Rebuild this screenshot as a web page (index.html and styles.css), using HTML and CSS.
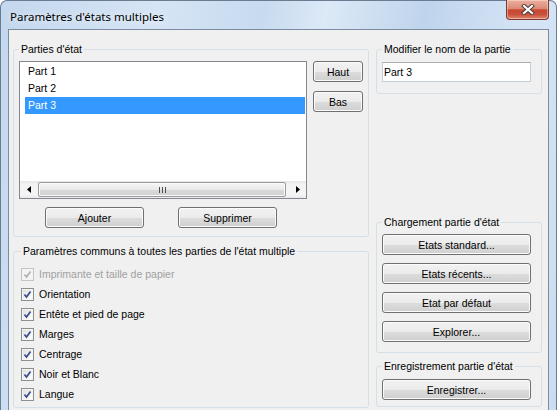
FILE: index.html
```html
<!DOCTYPE html>
<html lang="fr">
<head>
    <meta charset="UTF-8">
    <meta name="viewport" content="width=device-width, initial-scale=1.0">
    <title>Paramètres d'états multiples</title>
    <link rel="stylesheet" href="styles.css">
</head>
<body>
    <div class="window">
        <div class="titlebar">
            <span class="title">Paramètres d'états multiples</span>
            <button class="close-btn" title="Fermer">
                <svg width="14" height="11" viewBox="0 0 14 11">
                    <path d="M3 2 L11 9 M11 2 L3 9" stroke="#4a3a38" stroke-width="4" stroke-linecap="square" fill="none"/>
                    <path d="M3 2 L11 9 M11 2 L3 9" stroke="#ffffff" stroke-width="2.2" stroke-linecap="square" fill="none"/>
                </svg>
            </button>
        </div>

        <div class="client">
            <div class="col-left">
                <fieldset class="group parts">
                    <legend>Parties d'état</legend>
                    <div class="parts-row">
                        <div class="listbox">
                            <ul class="items">
                                <li>Part 1</li>
                                <li>Part 2</li>
                                <li class="selected">Part 3</li>
                            </ul>
                            <div class="hscroll">
                                <span class="arrow"><svg width="4" height="7" viewBox="0 0 4 7"><path d="M4 0 L0 3.5 L4 7 Z" fill="#000"/></svg></span>
                                <span class="track">
                                    <span class="thumb">
                                        <svg width="7" height="6" viewBox="0 0 7 6"><path d="M0.5 0 V6 M3.5 0 V6 M6.5 0 V6" stroke="#4d4d4d" stroke-width="1"/></svg>
                                    </span>
                                </span>
                                <span class="arrow"><svg width="4" height="7" viewBox="0 0 4 7"><path d="M0 0 L4 3.5 L0 7 Z" fill="#000"/></svg></span>
                            </div>
                        </div>
                        <div class="side-btns">
                            <button class="btn">Haut</button>
                            <button class="btn">Bas</button>
                        </div>
                    </div>
                    <div class="add-row">
                        <button class="btn add-btn">Ajouter</button>
                        <button class="btn add-btn">Supprimer</button>
                    </div>
                </fieldset>

                <fieldset class="group common">
                    <legend>Paramètres communs à toutes les parties de l'état multiple</legend>
                    <label class="check disabled"><span class="box"><svg width="11" height="11" viewBox="0 0 11 11"><path d="M2.5 5.5 L4.5 8 L8.5 2.5" stroke="#b4b4b4" stroke-width="1.8" fill="none"/></svg></span>Imprimante et taille de papier</label>
                    <label class="check"><span class="box"><svg width="11" height="11" viewBox="0 0 11 11"><path d="M2.5 5.5 L4.5 8 L8.5 2.5" stroke="#3b4f8a" stroke-width="1.8" fill="none"/></svg></span>Orientation</label>
                    <label class="check"><span class="box"><svg width="11" height="11" viewBox="0 0 11 11"><path d="M2.5 5.5 L4.5 8 L8.5 2.5" stroke="#3b4f8a" stroke-width="1.8" fill="none"/></svg></span>Entête et pied de page</label>
                    <label class="check"><span class="box"><svg width="11" height="11" viewBox="0 0 11 11"><path d="M2.5 5.5 L4.5 8 L8.5 2.5" stroke="#3b4f8a" stroke-width="1.8" fill="none"/></svg></span>Marges</label>
                    <label class="check"><span class="box"><svg width="11" height="11" viewBox="0 0 11 11"><path d="M2.5 5.5 L4.5 8 L8.5 2.5" stroke="#3b4f8a" stroke-width="1.8" fill="none"/></svg></span>Centrage</label>
                    <label class="check"><span class="box"><svg width="11" height="11" viewBox="0 0 11 11"><path d="M2.5 5.5 L4.5 8 L8.5 2.5" stroke="#3b4f8a" stroke-width="1.8" fill="none"/></svg></span>Noir et Blanc</label>
                    <label class="check"><span class="box"><svg width="11" height="11" viewBox="0 0 11 11"><path d="M2.5 5.5 L4.5 8 L8.5 2.5" stroke="#3b4f8a" stroke-width="1.8" fill="none"/></svg></span>Langue</label>
                </fieldset>
            </div>

            <div class="col-right">
                <fieldset class="group rename">
                    <legend>Modifier le nom de la partie</legend>
                    <input type="text" class="name-input" value="Part 3">
                </fieldset>

                <fieldset class="group load">
                    <legend>Chargement partie d'état</legend>
                    <button class="btn">Etats standard...</button>
                    <button class="btn">Etats récents...</button>
                    <button class="btn">Etat par défaut</button>
                    <button class="btn">Explorer...</button>
                </fieldset>

                <fieldset class="group save">
                    <legend>Enregistrement partie d'état</legend>
                    <button class="btn">Enregistrer...</button>
                </fieldset>
            </div>
        </div>
    </div>
</body>
</html>
```

FILE: styles.css
```css
* {
    box-sizing: border-box;
}
body {
    margin: 0;
    overflow: hidden;
    background: #ffffff;
    font-family: "Liberation Sans", Arial, sans-serif;
    font-size: 10.5px;
    color: #000;
}
.window {
    width: 557px;
    height: 410px;
    display: flex;
    flex-direction: column;
    padding: 0 7px;
    border: 1px solid #6a7c92;
    border-bottom: none;
    border-radius: 7px 7px 0 0;
    background: linear-gradient(100deg, #c3d7ee 0%, #d6e5f5 25%, #c7daef 42%, #dce9f7 52%, #bfd4ec 68%, #d6e5f6 85%, #cadcf0 100%);
}
.titlebar {
    height: 28px;
    display: flex;
    align-items: center;
    justify-content: space-between;
    padding-left: 2px;
}
.title {
    font-family: "Noto Sans", "Liberation Sans", sans-serif;
    font-size: 11.5px;
    color: #000;
    padding-top: 2px;
    text-shadow: 0 0 6px rgba(255, 255, 255, 0.9);
}
.close-btn {
    align-self: flex-start;
    margin-top: -1px;
    width: 43px;
    height: 20px;
    padding: 0;
    display: flex;
    align-items: center;
    justify-content: center;
    border: 1px solid #7a3b30;
    border-top: none;
    border-radius: 0 0 4px 4px;
    background: linear-gradient(#eab0a1 0%, #dc8a76 45%, #c9472f 52%, #c9503a 75%, #e08570 100%);
    box-shadow: inset 0 0 0 1px rgba(255, 230, 220, 0.45);
}
.client {
    flex: 1;
    display: flex;
    gap: 7px;
    padding: 13px 6px 0 4px;
    background: #f0f0f0;
    border: 1px solid #7b8ba0;
    border-bottom: none;
}
.col-left {
    width: 356px;
    display: flex;
    flex-direction: column;
}
.col-right {
    width: 166px;
    display: flex;
    flex-direction: column;
}

/* group boxes */
.group {
    margin: 0;
    min-width: 0;
    border: 1px solid #d5dfe5;
    border-radius: 3px;
}
.group legend {
    padding: 0 2px;
    line-height: 13px;
}
.parts {
    padding: 5px 5px 8px 5px;
}
.common {
    margin-top: 8px;
    padding: 6px 7px 3px 7px;
}
.rename {
    padding: 6px 10px 11px 5px;
}
.load {
    margin-top: 122px;
    padding: 5px 10px 10px 5px;
    display: flex;
    flex-direction: column;
    gap: 8px;
}
.save {
    margin-top: 7px;
    padding: 6px 10px 6px 5px;
}

/* buttons */
.btn {
    display: block;
    width: 100%;
    height: 21px;
    padding: 0;
    font-family: "Liberation Sans", Arial, sans-serif;
    font-size: 10.5px;
    color: #000;
    border: 1px solid #707070;
    border-radius: 3px;
    background: linear-gradient(#f2f2f2 0%, #ebebeb 50%, #dddddd 51%, #cfcfcf 100%);
    box-shadow: inset 0 0 0 1px #fbfbfb;
}

/* list of parts */
.parts-row {
    display: flex;
    gap: 6px;
}
.listbox {
    width: 288px;
    height: 138px;
    display: flex;
    flex-direction: column;
    background: #fff;
    border: 1px solid #828790;
}
.items {
    flex: 1;
    list-style: none;
    margin: 0;
    padding: 1px 0 0 0;
}
.items li {
    height: 17px;
    line-height: 17px;
    margin: 0 1px 0 5px;
    padding-left: 3px;
}
.items li.selected {
    background: #3399ff;
    color: #fff;
}
.hscroll {
    height: 17px;
    display: flex;
    background: linear-gradient(#e6e6e6 0%, #f3f3f3 20%, #f5f5f5 80%, #eaeaea 100%);
}
.arrow {
    width: 17px;
    display: flex;
    align-items: center;
    justify-content: center;
}
.track {
    flex: 1;
    display: flex;
    padding: 1px 3px 1px 1px;
}
.thumb {
    flex: 1;
    display: flex;
    align-items: center;
    justify-content: center;
    border: 1px solid #9a9a9a;
    border-radius: 2px;
    background: linear-gradient(#f6f6f6 0%, #e9e9e9 50%, #d9d9d9 51%, #d2d2d2 100%);
    box-shadow: inset 0 0 0 1px #fafafa;
}
.side-btns {
    width: 50px;
    display: flex;
    flex-direction: column;
    gap: 9px;
}
.add-row {
    display: flex;
    gap: 34px;
    margin: 8px 0 0 26px;
}
.add-btn {
    width: 99px;
}

/* checkboxes */
.check {
    height: 20px;
    display: flex;
    align-items: center;
    gap: 5px;
}
.box {
    width: 13px;
    height: 13px;
    display: flex;
    align-items: center;
    justify-content: center;
    border: 1px solid #8e8f8f;
    background: linear-gradient(135deg, #dcdcdc 0%, #f4f4f4 60%, #ffffff 100%);
    box-shadow: inset 0 0 0 1px #f4f4f4;
}
.check.disabled {
    color: #a0a0a0;
}
.check.disabled .box {
    border-color: #c4c4c4;
    background: #f4f4f4;
}

/* name field */
.name-input {
    display: block;
    width: 100%;
    height: 20px;
    padding: 0 0 0 1px;
    font-family: "Liberation Sans", Arial, sans-serif;
    font-size: 10.5px;
    color: #000;
    background: #fff;
    border: 1px solid #c5cdd6;
    border-top-color: #abadb3;
    outline: none;
}
```
